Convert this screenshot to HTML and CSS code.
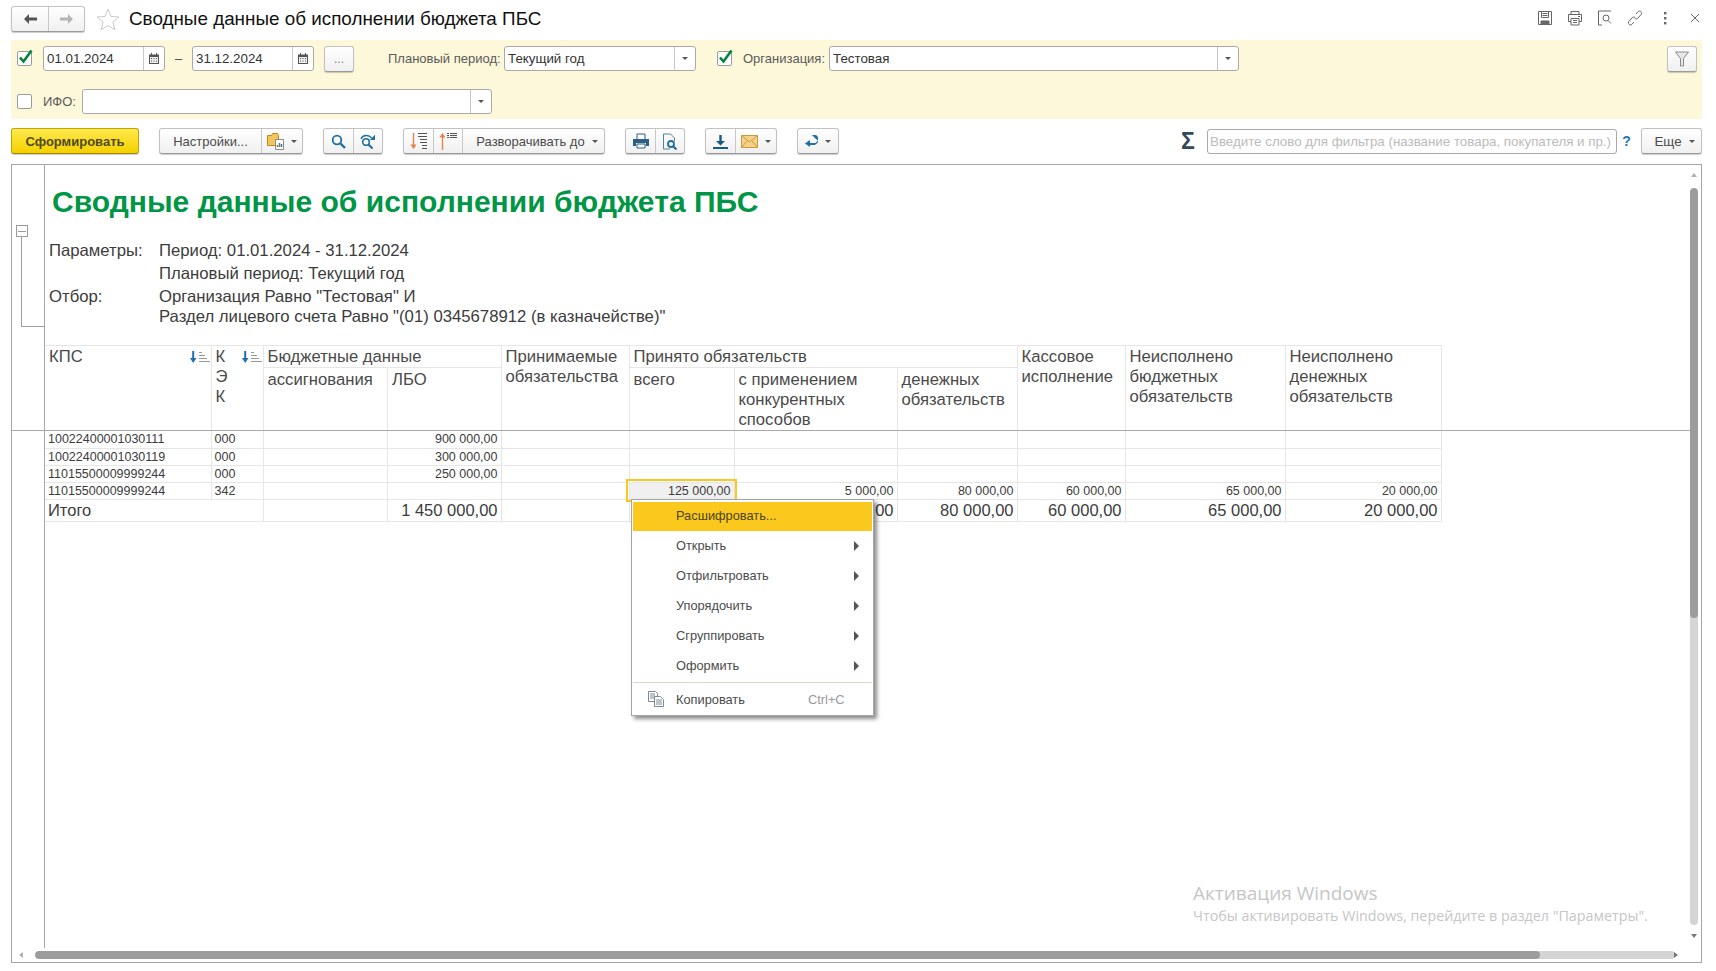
FILE: index.html
```html
<!DOCTYPE html>
<html lang="ru">
<head>
<meta charset="utf-8">
<title>Сводные данные об исполнении бюджета ПБС</title>
<link rel="stylesheet" href="styles.css">
</head>
<body>
<div class="page">
  <header class="head">
    <div class="grp nav">
      <div class="seg w36"><svg width="14" height="12" viewBox="0 0 14 12"><path d="M6 1 1 6l5 5V7.500h8v-3H6z" fill="#555"/></svg></div>
      <div class="seg w36"><svg width="14" height="12" viewBox="0 0 14 12"><path d="M8 1l5 5-5 5V7.500H0v-3h8z" fill="#b4b4b4"/></svg></div>
    </div>
    <svg class="star" width="24" height="22" viewBox="0 0 24 22"><path d="M12 1l3 7.400 8 .6-6.100 5.100 2 7.700L12 17.600 5.100 21.800l2-7.700L1 9l8-.6z" fill="#fff" stroke="#c9c9c9"/></svg>
    <h1 class="page-title">Сводные данные об исполнении бюджета ПБС</h1>
    <div class="head-tools">
      <svg width="16" height="16" viewBox="0 0 16 16" fill="none" stroke="#666"><path d="M1.500 1.500h13v13h-13z"/><path d="M4.500 1.500v6h7v-6M5.500 3.500h5M5.500 5.500h5"/><path d="M4 11h8v3.500H4z" fill="#666"/></svg>
      <svg width="16" height="16" viewBox="0 0 16 16" fill="none" stroke="#666"><path d="M4 4.500v-3h8v3M1.500 4.500h13v7H12M4 11.500H1.500v-7"/><path d="M4 8.500h8v6.500H4zM6 10.500h4M6 12.500h4M11 6.500h2"/></svg>
      <svg width="16" height="16" viewBox="0 0 16 16" fill="none" stroke="#666"><path d="M5 1H1.500v14H5M5 1h9"/><circle cx="9" cy="8" r="3"/><path d="M11 10.500l3 3"/></svg>
      <svg width="16" height="16" viewBox="0 0 16 16" fill="none" stroke="#666"><path d="M9 4l2-2.300c1-.9 2.300-.8 3 0s.8 2 0 3l-3.300 3.600c-1 .9-2.200.8-3 0"/><path d="M7 12l-2 2.300c-1 .9-2.300.8-3 0s-.8-2 0-3l3.300-3.600c1-.9 2.200-.8 3 0"/></svg>
      <svg width="16" height="16" viewBox="0 0 16 16" fill="#666"><rect x="7" y="2" width="2.400" height="2.400"/><rect x="7" y="7" width="2.400" height="2.400"/><rect x="7" y="12" width="2.400" height="2.400"/></svg>
      <svg width="16" height="16" viewBox="0 0 16 16" fill="none" stroke="#666"><path d="M4 4l8 8M12 4l-8 8"/></svg>
    </div>
  </header>

  <section class="panel">
    <div class="panel-row">
      <span class="cb"><svg width="17" height="17" viewBox="0 0 17 17"><path d="M3 8.500l3.500 4L14.500 1.500" fill="none" stroke="#00843d" stroke-width="2.600"/></svg></span>
      <div class="field date"><span class="field-text">01.01.2024</span><span class="field-btn"><svg width="10" height="11" viewBox="0 0 10 11"><path d="M0 1.500h10V11H0z" fill="#555"/><path d="M1 4h8v6H1z" fill="#eee"/><path d="M2.500 0v2M7.500 0v2" stroke="#555"/><path d="M2 5h1v1H2zm2.500 0h1v1h-1zM7 5h1v1H7zM2 7.500h1v1H2zm2.500 0h1v1h-1zm2.500 0h1v1H7z" fill="#555"/></svg></span></div>
      <span class="dash">–</span>
      <div class="field date"><span class="field-text">31.12.2024</span><span class="field-btn"><svg width="10" height="11" viewBox="0 0 10 11"><path d="M0 1.500h10V11H0z" fill="#555"/><path d="M1 4h8v6H1z" fill="#eee"/><path d="M2.500 0v2M7.500 0v2" stroke="#555"/><path d="M2 5h1v1H2zm2.500 0h1v1h-1zM7 5h1v1H7zM2 7.500h1v1H2zm2.500 0h1v1h-1zm2.500 0h1v1H7z" fill="#555"/></svg></span></div>
      <div class="btn dots">...</div>
      <label class="lbl lbl-plan">Плановый период:</label>
      <div class="field plan"><span class="field-text">Текущий год</span><span class="field-btn"><i class="tri"></i></span></div>
      <span class="cb cb-org"><svg width="17" height="17" viewBox="0 0 17 17"><path d="M3 8.500l3.500 4L14.500 1.500" fill="none" stroke="#00843d" stroke-width="2.600"/></svg></span>
      <label class="lbl lbl-org">Организация:</label>
      <div class="field org"><span class="field-text">Тестовая</span><span class="field-btn"><i class="tri"></i></span></div>
      <div class="btn filter"><svg width="14" height="16" viewBox="0 0 14 16"><path d="M.5 1h13L8.500 7.500V15H5.500V7.500z" fill="#e8e8e8" stroke="#8a8a8a"/></svg></div>
    </div>
    <div class="panel-row row2">
      <span class="cb"></span>
      <label class="lbl lbl-ifo">ИФО:</label>
      <div class="field ifo"><span class="field-text"></span><span class="field-btn"><i class="tri"></i></span></div>
    </div>
  </section>

  <nav class="toolbar">
    <div class="btn primary">Сформировать</div>
    <div class="grp mt20">
      <div class="seg w102">Настройки...</div>
      <div class="seg w42"><svg width="17" height="18" viewBox="0 0 17 18"><path d="M.5 3.500h4l1-2h5l1 2v10H.5z" fill="#f3c65c" stroke="#b98a2a"/><path d="M8.500 7.500h8v10h-8z" fill="#fff" stroke="#8a8a8a"/><path d="M10.500 15v-2" stroke="#d0443a" stroke-width="1.500"/><path d="M12.500 15v-4" stroke="#4a9a4a" stroke-width="1.500"/><path d="M14.500 15v-3" stroke="#3a70b0" stroke-width="1.500"/></svg><i class="tri tri-gap"></i></div>
    </div>
    <div class="grp mt20">
      <div class="seg w30"><svg width="15" height="15" viewBox="0 0 15 15" fill="none" stroke="#1f6f9f"><circle cx="6" cy="6" r="4.300" stroke-width="1.800"/><path d="M9.500 9.500l4.500 4.500" stroke-width="2.400"/></svg></div>
      <div class="seg w30"><svg width="16" height="15" viewBox="0 0 16 15" fill="none" stroke="#1f6f9f"><circle cx="6" cy="8" r="3.300" stroke-width="1.600"/><path d="M8.500 10.500l4 4" stroke-width="2.200"/><path d="M1 5c2-4.500 8-4.500 10.500-1" stroke-width="1.400"/><path d="M15 .8v5.200h-5.200z" fill="#1f6f9f" stroke="none"/></svg></div>
    </div>
    <div class="grp mt20">
      <div class="seg w30"><svg width="18" height="18" viewBox="0 0 18 18" fill="none"><path d="M3.500 1v15" stroke="#e8804a" stroke-width="1.400"/><path d="M.5 12.500h6L3.500 17z" fill="#e8804a"/><path d="M8 1.500h9M8 4.500h9M10 7.500h7M10 10.500h7M12 13.500h5M12 16.500h5" stroke="#555"/></svg></div>
      <div class="seg w30"><svg width="18" height="18" viewBox="0 0 18 18" fill="none"><path d="M3.500 3v15" stroke="#e8804a" stroke-width="1.400"/><path d="M.5 5.500h6L3.500 1z" fill="#e8804a"/><path d="M8 1.500h2M11 1.500h7M8 3.500h2M11 3.500h7M8 5.500h2M11 5.500h7" stroke="#555"/></svg></div>
      <div class="seg w142">Разворачивать до<i class="tri tri-gap"></i></div>
    </div>
    <div class="grp mt20">
      <div class="seg w30"><svg width="16" height="16" viewBox="0 0 16 16"><path d="M4 6V1h8v5" fill="#fff" stroke="#2c5f84"/><path d="M0 6h16v7h-3v-3H3v3H0z" fill="#2c5f84"/><path d="M4 11h8v4H4z" fill="#fff" stroke="#2c5f84"/></svg></div>
      <div class="seg w30"><svg width="16" height="17" viewBox="0 0 16 17" fill="none"><path d="M1.500 1h7l4 4v3M1.500 1v15H8" stroke="#5c7f99"/><circle cx="9" cy="11" r="3" stroke="#1f6f9f" stroke-width="1.800"/><path d="M11 13l3.500 3.500" stroke="#1f6f9f" stroke-width="2.200"/></svg></div>
    </div>
    <div class="grp mt20">
      <div class="seg w30"><svg width="15" height="15" viewBox="0 0 15 15"><path d="M6.300 1h2.400v6H12l-4.500 4.500L3 7h3.300z" fill="#1c5a86"/><path d="M0 13h15v2H0z" fill="#1c5a86"/></svg></div>
      <div class="seg w42"><svg width="17" height="13" viewBox="0 0 17 13"><path d="M.5.500h16v12H.5z" fill="#f6d188" stroke="#c99a3e"/><path d="M.5.500l8 6.500 8-6.500M.5 12.500l6-7M16.500 12.500l-6-7" fill="none" stroke="#c99a3e"/></svg><i class="tri tri-gap"></i></div>
    </div>
    <div class="grp mt20">
      <div class="seg w40"><svg width="13" height="14" viewBox="0 0 13 14"><path d="M7 1h3c2 0 3 1.500 3 3.500S11.500 9 10 9H5V6L0 9.500 5 13v-2h5c-1 0 3-1 3-4" fill="#1c6ea4"/></svg><i class="tri tri-gap"></i></div>
    </div>
    <span class="spacer"></span>
    <span class="sigma">Σ</span>
    <div class="field search"><span class="placeholder">Введите слово для фильтра (название товара, покупателя и пр.)</span></div>
    <span class="help">?</span>
    <div class="btn more">Еще<i class="tri tri-gap"></i></div>
  </nav>

  <main class="report">
    <div class="rep-main">
      <div class="rep-top">
        <div class="gutter">
          <span class="tree-box"></span>
          <span class="tree-line"></span>
        </div>
        <div class="rep-content">
          <h2 class="rep-title">Сводные данные об исполнении бюджета ПБС</h2>
          <div class="params">
            <div>Параметры:</div><div>Период: 01.01.2024 - 31.12.2024</div>
            <div></div><div>Плановый период: Текущий год</div>
            <div>Отбор:</div><div>Организация Равно "Тестовая" И</div>
            <div class="p-short"></div><div class="p-short">Раздел лицевого счета Равно "(01) 0345678912 (в казначействе)"</div>
          </div>
          <table class="tbl thead-tbl">
            <colgroup><col class="c1"><col class="c2"><col class="c3"><col class="c4"><col class="c5"><col class="c6"><col class="c7"><col class="c8"><col class="c9"><col class="c10"><col class="c11"></colgroup>
            <tr class="r1">
              <td rowspan="2"><div class="hcell"><span>КПС</span><svg class="sort" width="20" height="14" viewBox="0 0 20 14"><path d="M3.200 1v8" stroke="#1f6fb0" stroke-width="2"/><path d="M0 8h6.500L3.200 13z" fill="#1f6fb0"/><path d="M9 2.500h3M9 5.500h6M9 8.500h8M9 11.500h11" stroke="#999"/></svg></div></td>
              <td rowspan="2"><div class="hcell"><span>К<br>Э<br>К</span><svg class="sort" width="20" height="14" viewBox="0 0 20 14"><path d="M3.200 1v8" stroke="#1f6fb0" stroke-width="2"/><path d="M0 8h6.500L3.200 13z" fill="#1f6fb0"/><path d="M9 2.500h3M9 5.500h6M9 8.500h8M9 11.500h11" stroke="#999"/></svg></div></td>
              <td colspan="2" class="grp-h">Бюджетные данные</td>
              <td rowspan="2">Принимаемые обязательства</td>
              <td colspan="3" class="grp-h">Принято обязательств</td>
              <td rowspan="2">Кассовое исполнение</td>
              <td rowspan="2">Неисполнено бюджетных обязательств</td>
              <td rowspan="2">Неисполнено денежных обязательств</td>
            </tr>
            <tr class="r2">
              <td class="sub">ассигнования</td>
              <td class="sub">ЛБО</td>
              <td class="sub">всего</td>
              <td class="sub">с применением конкурентных способов</td>
              <td class="sub">денежных обязательств</td>
            </tr>
          </table>
        </div>
      </div>
      <div class="rep-data">
        <div class="gutter"></div>
        <div class="rep-content">
          <table class="tbl data-tbl">
            <colgroup><col class="c1"><col class="c2"><col class="c3"><col class="c4"><col class="c5"><col class="c6"><col class="c7"><col class="c8"><col class="c9"><col class="c10"><col class="c11"></colgroup>
            <tr><td>10022400001030111</td><td>000</td><td></td><td class="n">900 000,00</td><td></td><td></td><td></td><td></td><td></td><td></td><td></td></tr>
            <tr><td>10022400001030119</td><td>000</td><td></td><td class="n">300 000,00</td><td></td><td></td><td></td><td></td><td></td><td></td><td></td></tr>
            <tr><td>11015500009999244</td><td>000</td><td></td><td class="n">250 000,00</td><td></td><td></td><td></td><td></td><td></td><td></td><td></td></tr>
            <tr><td>11015500009999244</td><td>342</td><td></td><td></td><td></td><td class="n active">125 000,00</td><td class="n">5 000,00</td><td class="n">80 000,00</td><td class="n">60 000,00</td><td class="n">65 000,00</td><td class="n">20 000,00</td></tr>
            <tr class="total"><td colspan="2">Итого</td><td></td><td class="n">1 450 000,00</td><td></td><td></td><td class="n">5 000,00</td><td class="n">80 000,00</td><td class="n">60 000,00</td><td class="n">65 000,00</td><td class="n">20 000,00</td></tr>
          </table>
        </div>
      </div>
    </div>

    <div class="vscroll"><span class="vthumb"></span></div>
    <i class="arr arr-up"></i>
    <i class="arr arr-down"></i>
    <div class="hscroll"><span class="hthumb"></span></div>
    <i class="arr arr-left"></i>
    <i class="arr arr-right"></i>

    <div class="menu">
      <div class="mi mi-first">Расшифровать...</div>
      <div class="mi">Открыть<i class="sub-arr"></i></div>
      <div class="mi">Отфильтровать<i class="sub-arr"></i></div>
      <div class="mi">Упорядочить<i class="sub-arr"></i></div>
      <div class="mi">Сгруппировать<i class="sub-arr"></i></div>
      <div class="mi">Оформить<i class="sub-arr"></i></div>
      <div class="msep"></div>
      <div class="mi mi-copy">
        <svg class="mi-icon" width="16" height="16" viewBox="0 0 16 16" fill="#fff" stroke="#7a8a99"><path d="M.5.500h7l2 2v8h-9z"/><path d="M2 3h5M2 5h5M2 7h5" /><path d="M6.500 5.500h6l3 3v7h-9z"/><path d="M8 9h6M8 11h6M8 13h6"/></svg>
        Копировать<span class="shortcut">Ctrl+C</span>
      </div>
    </div>

    <div class="watermark">
      <div class="wm1">Активация Windows</div>
      <div class="wm2">Чтобы активировать Windows, перейдите в раздел "Параметры".</div>
    </div>
  </main>
</div>
</body>
</html>
```
FILE: styles.css
```css
* { box-sizing: border-box; }
html, body { margin: 0; padding: 0; background: #fff; }
body { font-family: "Liberation Sans", Arial, sans-serif; font-size: 13px; color: #4b4b4b; }
.page { width: 1716px; height: 971px; padding: 0 14px 0 11px; overflow: hidden; }

.head { height: 40px; display: flex; align-items: flex-start; padding-top: 6px; }
.nav { height: 24px; }
.star { margin: 2px 0 0 11px; }
.page-title { margin: 0 0 0 9px; font-size: 18.850px; font-weight: 400; color: #111; line-height: 26px; }
.head-tools { margin-left: auto; display: flex; gap: 14px; padding: 4px 0 0; margin-right: -1px; }

.grp { display: inline-flex; height: 26px; border: 1px solid #c2c2c2; border-bottom-color: #9a9a9a; border-radius: 3px; background: linear-gradient(#fff, #f0f0f0); box-shadow: 0 1px 1px rgba(0,0,0,.2); flex: none; }
.seg { display: flex; align-items: center; justify-content: center; height: 100%; border-left: 1px solid #c8c8c8; flex: none; white-space: nowrap; }
.seg:first-child { border-left: 0; }
.w36 { width: 36px; } .w30 { width: 29px; } .w40 { width: 40px; } .w42 { width: 41px; } .w102 { width: 101px; }
.w142 { width: 142px; padding-left: 7px; }
.mt20 { margin-left: 20px; }

.btn { display: flex; align-items: center; justify-content: center; border: 1px solid #c2c2c2; border-bottom-color: #9a9a9a; border-radius: 3px; background: linear-gradient(#fff, #f0f0f0); box-shadow: 0 1px 1px rgba(0,0,0,.2); flex: none; white-space: nowrap; }

.panel { height: 79px; background: #fdf8d9; padding: 6px 5px 0 6px; }
.panel-row { display: flex; align-items: center; height: 25px; }
.row2 { margin-top: 18px; }
.cb { width: 15px; height: 15px; border: 1px solid #9c9c9c; border-radius: 2px; background: #fff; position: relative; flex: none; }
.cb svg { position: absolute; left: -1px; top: -3px; }
.field { display: flex; height: 25px; border: 1px solid #a9a9a9; border-radius: 3px; background: #fff; flex: none; overflow: hidden; font-size: 13.330px; }
.field-text { flex: 1; padding-left: 3px; line-height: 23px; color: #333; white-space: nowrap; }
.field-btn { width: 21px; border-left: 1px solid #c8c8c8; display: flex; align-items: center; justify-content: center; flex: none; }
.date { width: 122px; margin-left: 11px; }
.dash { width: 27px; text-align: center; margin-right: -11px; }
.dots { width: 30px; height: 26px; margin-left: 10px; color: #777; font-size: 12px; }
.lbl { white-space: nowrap; color: #5a5a5a; flex: none; }
.lbl-plan { width: 110px; margin-left: 34px; }
.plan { width: 192px; margin-left: 6px; }
.cb-org { margin-left: 21px; }
.lbl-org { width: 81px; margin-left: 11px; }
.org { width: 410px; margin-left: 5px; }
.filter { width: 30px; height: 26px; margin-left: auto; }
.lbl-ifo { width: 34px; margin-left: 11px; }
.ifo { width: 410px; margin-left: 5px; }

.tri { display: inline-block; width: 0; height: 0; border: 3px solid transparent; border-top: 3.500px solid #555; border-bottom: 0; flex: none; }
.tri-gap { margin-left: 7px; }

.toolbar { display: flex; align-items: flex-start; height: 26px; margin-top: 9px; }
.primary { width: 128px; height: 26px; background: linear-gradient(#ffe94d, #f5d000); border-color: #c2a600; border-bottom-color: #a08800; font-weight: 700; color: #4f4a1c; font-size: 13px; }
.spacer { flex: 1; }
.sigma { font-size: 23px; font-weight: 700; color: #34495a; line-height: 26px; width: 27px; padding-left: 1px; }
.search { width: 410px; height: 25px; margin-top: 1px; }
.placeholder { padding-left: 2px; line-height: 23px; color: #bbb; white-space: nowrap; }
.help { width: 24px; text-align: center; padding-right: 5px; color: #1a78c2; line-height: 26px; font-size: 14px; font-weight: 700; }
.more { width: 61px; height: 26px; padding-left: 6px; font-size: 13.330px; }

.report { position: relative; height: 799px; margin-top: 10px; border: 1px solid #a5a5a5; overflow: hidden; }
.rep-main { height: 783px; margin-right: 11px; display: flex; flex-direction: column; }
.rep-top { height: 265px; display: flex; }
.rep-data { flex: 1; display: flex; border-top: 1px solid #a8a8a8; }
.gutter { width: 33px; border-right: 1px solid #a8a8a8; flex: none; position: relative; }
.rep-content { flex: 1; min-width: 0; }
.tree-box { position: absolute; left: 4px; top: 60px; width: 12px; height: 12px; border: 1px solid #9a9a9a; background: linear-gradient(90deg,#9a9a9a,#9a9a9a) center/8px 1px no-repeat; }
.tree-line { position: absolute; left: 9px; top: 72px; width: 24px; height: 90px; border-left: 1px solid #a0a0a0; border-bottom: 1px solid #a0a0a0; }

.rep-title { margin: 0; padding: 20px 0 0 7px; height: 54px; font-size: 30.050px; line-height: 34px; font-weight: 700; color: #009646; white-space: nowrap; }
.params { display: grid; grid-template-columns: 110px 1fr; grid-template-rows: 23px 23px 23px 20px; padding-left: 4px; margin-top: 20px; font-size: 16.720px; line-height: 23px; color: #3c3c3c; }
.params > .p-short { line-height: 18px; }

.tbl { table-layout: fixed; width: 1396px; border-collapse: collapse; }
.c1 { width: 166px; } .c2 { width: 52px; } .c3 { width: 124.500px; } .c4 { width: 113.500px; } .c5 { width: 128px; } .c6 { width: 105px; } .c7 { width: 163px; } .c8 { width: 120px; } .c9 { width: 108px; } .c10 { width: 160px; } .c11 { width: 156px; }
.tbl td { border: 1px solid #e6e6e6; padding: 0 3px; vertical-align: top; }
.tbl td:first-child { border-left: 0; }
.thead-tbl { margin-top: 17px; font-size: 16.670px; line-height: 20px; color: #4a4a4a; }
.thead-tbl td { padding: 1px 4px 0; border-bottom: 0; }
.thead-tbl .r1 { height: 22px; }
.thead-tbl .r2 { height: 63px; }
.thead-tbl .sub { padding-top: 2px; }
.thead-tbl .grp-h { height: 22px; }
.hcell { display: flex; justify-content: space-between; align-items: flex-start; margin-right: -3px; }
.sort { margin-top: 3px; flex: none; }
.data-tbl { font-size: 12.500px; line-height: 15px; color: #3c3c3c; }
.data-tbl tr { height: 17px; }
.data-tbl td { white-space: nowrap; padding: 1px 3px 0; border-top: 0; overflow: hidden; }
.data-tbl .n { text-align: right; }
.data-tbl .total { height: 22px; font-size: 16.500px; line-height: 20px; }
.data-tbl .total td { padding-top: 0; }
.active { background: #f0f0f0; outline: 2px solid #fbc91d; outline-offset: 1px; position: relative; }

.vscroll { position: absolute; left: 1678px; top: 23px; width: 8px; height: 737px; background: #d4d4d4; border-radius: 4px; overflow: hidden; }
.vthumb { display: block; height: 430px; background: #9c9c9c; border-radius: 4px; }
.hscroll { position: absolute; left: 23px; top: 786px; width: 1640px; height: 8px; background: #d4d4d4; border-radius: 4px; overflow: hidden; }
.hthumb { display: block; width: 1505px; height: 8px; background: #9c9c9c; border-radius: 4px; }
.arr { position: absolute; width: 0; height: 0; border: 3px solid transparent; }
.arr-up { left: 1679px; top: 8px; border-top: 0; border-bottom: 4px solid #b0b0b0; }
.arr-down { left: 1679px; top: 769px; border-bottom: 0; border-top: 4px solid #777; }
.arr-left { left: 7px; top: 787px; border-left: 0; border-right: 4px solid #b0b0b0; }
.arr-right { left: 1662px; top: 787px; border-right: 0; border-left: 4px solid #777; }

.menu { position: absolute; left: 619px; top: 334px; width: 243px; height: 217px; background: #fff; border: 1px solid #a5a5a5; padding: 2px 1px 0; box-shadow: 3px 3px 4px rgba(0,0,0,.45); color: #4b4b4b; font-size: 12.800px; }
.mi { position: relative; height: 30px; display: flex; align-items: center; padding: 0 0 2px 43px; white-space: nowrap; }
.mi-first { height: 29px; background: #fbc91d; color: #4a4520; }
.sub-arr { position: absolute; left: 221px; top: 10px; width: 0; height: 0; border: 5px solid transparent; border-left: 5px solid #555; border-right: 0; }
.msep { height: 1px; background: #dcd8c4; margin-top: 1px; }
.mi-copy { height: 34px; }
.mi-icon { position: absolute; left: 15px; top: 8px; }
.shortcut { position: absolute; left: 175px; color: #999; }

.watermark { position: absolute; left: 1181px; top: 715px; color: #c6c6c6; font-family: "Open Sans", sans-serif; pointer-events: none; }
.wm1 { font-size: 19px; line-height: 26px; white-space: nowrap; }
.wm2 { font-size: 14.300px; line-height: 20px; white-space: nowrap; }
```
